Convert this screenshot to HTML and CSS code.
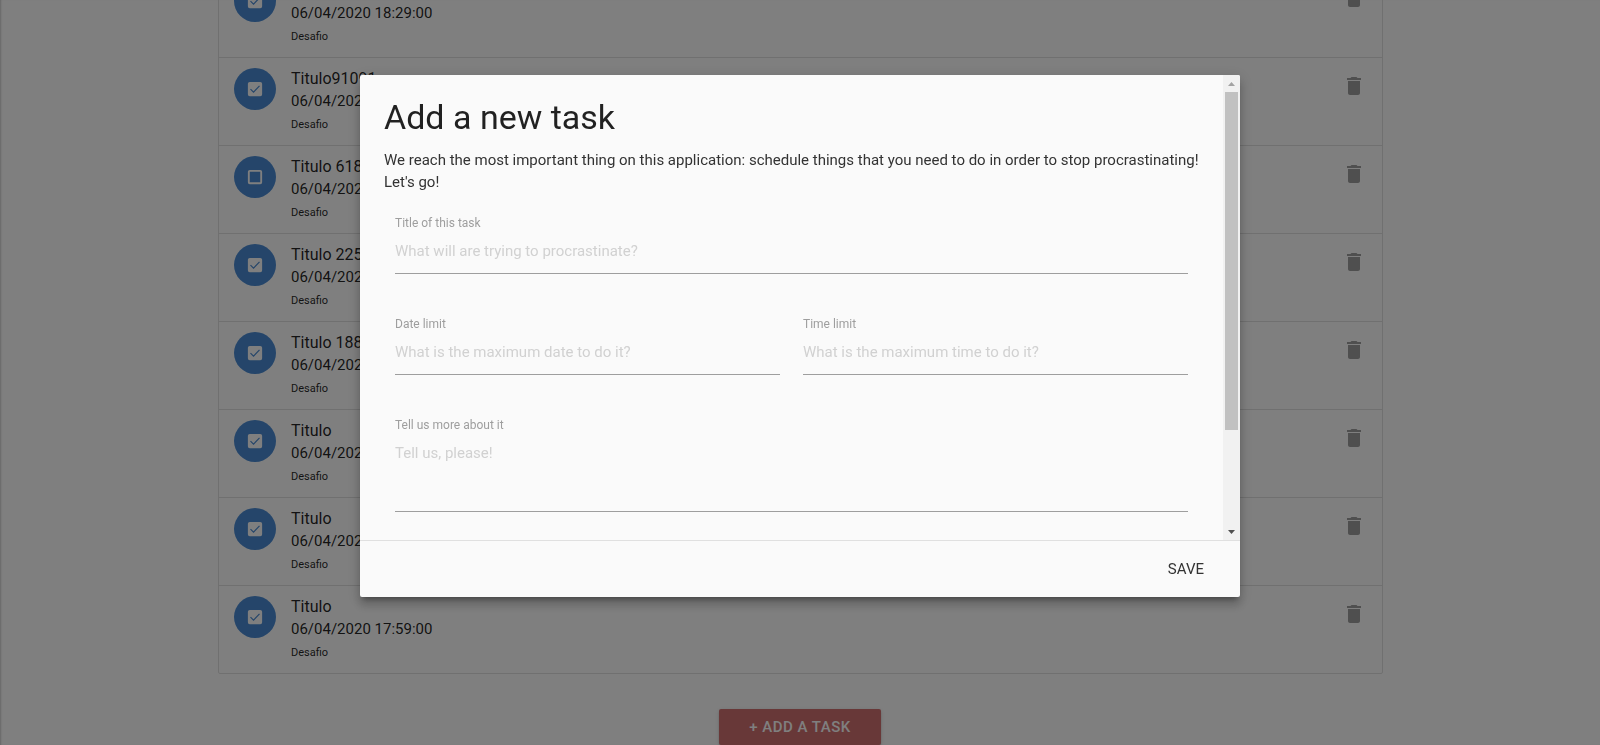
FILE: index.html
```html
<!DOCTYPE html>
<html lang="en">
<head>
<meta charset="utf-8">
<title>Tasks</title>
<meta name="viewport" content="width=device-width, initial-scale=1">
<link rel="stylesheet" href="styles.css">
</head>
<body>
<svg class="sprite" aria-hidden="true">
  <symbol id="icon-checked" viewBox="0 0 24 24">
    <path fill="currentColor" d="M5 2.500h14a2.500 2.500 0 0 1 2.500 2.500v14a2.500 2.500 0 0 1-2.500 2.500H5a2.500 2.500 0 0 1-2.500-2.500V5A2.500 2.500 0 0 1 5 2.500z"/>
    <path class="tick" d="M6 12.200l4 4 8-8.400"/>
  </symbol>
  <symbol id="icon-unchecked" viewBox="0 0 24 24">
    <path fill="currentColor" d="M19 5v14H5V5h14m0-2.500H5A2.500 2.500 0 0 0 2.500 5v14A2.500 2.500 0 0 0 5 21.500h14a2.500 2.500 0 0 0 2.500-2.500V5A2.500 2.500 0 0 0 19 2.500z"/>
  </symbol>
  <symbol id="icon-delete" viewBox="0 0 24 24">
    <path fill="currentColor" d="M6 19c0 1.100.9 2 2 2h8c1.100 0 2-.9 2-2V7H6v12zM19 4h-3.500l-1-1h-5l-1 1H5v2h14V4z"/>
  </symbol>
</svg>
<main class="page">
  <div class="container">
    <ul class="collection" id="tasks"></ul>
    <div class="actions"><button class="btn" type="button">+ ADD A TASK</button></div>
  </div>
</main>
<div class="overlay">
  <div class="modal" role="dialog" aria-modal="true" aria-labelledby="modal-title">
    <div class="modal-body">
      <form class="modal-content" id="task-form">
        <h4 class="modal-title" id="modal-title">Add a new task</h4>
        <p class="modal-text">We reach the most important thing on this application: schedule things that you need to do in order to stop procrastinating! Let's go!</p>
        <div class="fields">
          <div class="field wide">
            <label for="title">Title of this task</label>
            <input id="title" type="text" placeholder="What will are trying to procrastinate?">
          </div>
          <div class="field">
            <label for="date">Date limit</label>
            <input id="date" type="text" placeholder="What is the maximum date to do it?">
          </div>
          <div class="field">
            <label for="time">Time limit</label>
            <input id="time" type="text" placeholder="What is the maximum time to do it?">
          </div>
          <div class="field wide">
            <label for="details">Tell us more about it</label>
            <textarea id="details" placeholder="Tell us, please!"></textarea>
          </div>
        </div>
      </form>
      <div class="scrollbar" aria-hidden="true">
        <svg class="arrow up" viewBox="0 0 17 17"><path d="M5 11l3.500-4 3.500 4z"/></svg>
        <div class="track"><div class="thumb"></div></div>
        <svg class="arrow down" viewBox="0 0 17 17"><path d="M5 7h7l-3.500 4z"/></svg>
      </div>
    </div>
    <div class="modal-footer"><button class="btn-flat" type="submit" form="task-form">SAVE</button></div>
  </div>
</div>
<script src="tasks.js"></script>
</body>
</html>
```
FILE: styles.css
```css
* { box-sizing: border-box; }

body {
  margin: 0;
  background: #fff;
  color: rgba(0, 0, 0, 0.87);
  font-family: Roboto, "Liberation Sans", sans-serif;
  font-size: 15px;
  line-height: 22px;
}

button, input, textarea { font: inherit; }

.sprite { display: none; }

.page {
  height: 100vh;
  overflow: hidden;
  display: flex;
  flex-direction: column;
  justify-content: flex-end;
  box-shadow: inset 2px 0 2px -1px rgba(0, 0, 0, 0.2);
}

.container {
  width: 70%;
  margin: 0 auto;
}

.collection {
  list-style: none;
  margin: 0 -23px 35px -22px;
  padding: 0;
  border: 1px solid #e0e0e0;
  border-radius: 2px;
}

.item {
  display: flex;
  gap: 15px;
  padding: 10px 16px 8px 15px;
  border-bottom: 1px solid #e0e0e0;
}

.item:last-child { border-bottom: 0; }

.toggle {
  flex: none;
  display: grid;
  place-items: center;
  width: 42px;
  height: 42px;
  padding: 0;
  border: 0;
  border-radius: 50%;
  background: #4a8bd4;
  color: #fff;
}

.toggle svg { width: 18px; height: 18px; }

.tick {
  fill: none;
  stroke: #4a8bd4;
  stroke-width: 1.6;
}

.info { flex: 1; }
.info span { display: block; }
.name { font-size: 16px; }
.date { line-height: 23px; }
.tag { font-size: 11px; line-height: 24px; }

.delete {
  align-self: flex-start;
  margin-top: 6px;
  padding: 0;
  border: 0;
  background: none;
  color: #9e9e9e;
}

.delete svg { display: block; width: 24px; height: 24px; }

.actions { text-align: center; }

.btn {
  display: inline-block;
  height: 36px;
  padding: 0 30px;
  border: 0;
  border-radius: 2px;
  background: #d07070;
  color: #fff;
  font-weight: 500;
  letter-spacing: 0.5px;
  vertical-align: top;
  box-shadow: 0 2px 2px rgba(0, 0, 0, 0.14), 0 1px 5px rgba(0, 0, 0, 0.12);
}

.overlay {
  position: fixed;
  inset: 0;
  background: rgba(0, 0, 0, 0.5);
  display: flex;
  justify-content: center;
  align-items: flex-start;
  padding-top: 75px;
}

.modal {
  width: 55%;
  height: 70vh;
  display: flex;
  flex-direction: column;
  overflow: hidden;
  border-radius: 2px;
  background: #fafafa;
  box-shadow: 0 8px 10px 1px rgba(0, 0, 0, 0.14), 0 3px 14px 2px rgba(0, 0, 0, 0.12), 0 5px 5px -3px rgba(0, 0, 0, 0.3);
}

.modal-body { flex: 1; display: flex; min-height: 0; }

.modal-content {
  flex: 1;
  min-width: 0;
  overflow: hidden;
  padding: 24px;
}

.modal-title {
  margin: 0 0 13px;
  font-size: 34px;
  line-height: 37px;
  font-weight: 400;
}

.modal-text { margin: 0; color: #333; }

.fields {
  display: grid;
  grid-template-columns: 1fr 1fr;
  column-gap: 23px;
  row-gap: 44px;
  padding: 24px 11px 0;
}

.field { display: flex; flex-direction: column; }
.field.wide { grid-column: 1 / -1; }

.field label {
  color: #9e9e9e;
  font-size: 12px;
  line-height: 12px;
}

.field input,
.field textarea {
  width: 100%;
  height: 45px;
  padding: 0;
  border: 0;
  border-bottom: 1px solid #9e9e9e;
  border-radius: 0;
  outline: 0;
  background: transparent;
  resize: none;
}

.field textarea { height: 81px; padding: 11px 0; }

.field input::placeholder,
.field textarea::placeholder { color: #d1d1d1; }

.scrollbar {
  width: 17px;
  display: flex;
  flex-direction: column;
  background: #f1f1f1;
}

.arrow { width: 17px; height: 17px; }
.up { fill: #a3a3a3; }
.down { fill: #505050; }
.track { flex: 1; padding: 0 2px; }
.thumb { height: 78.5%; background: #c1c1c1; }

.modal-footer {
  height: 57px;
  padding: 10px 6px;
  border-top: 1px solid #e0e0e0;
  text-align: right;
}

.btn-flat {
  height: 36px;
  padding: 0 30px;
  border: 0;
  background: none;
  color: #343434;
}
```
FILE: tasks.js
```js
const tasks = [
  { name: "Titulo", date: "06/04/2020 18:29:00", done: true },
  { name: "Titulo91091", date: "06/04/2020 18:29:00", done: true },
  { name: "Titulo 618", date: "06/04/2020 18:29:00", done: false },
  { name: "Titulo 225", date: "06/04/2020 18:29:00", done: true },
  { name: "Titulo 188", date: "06/04/2020 18:29:00", done: true },
  { name: "Titulo", date: "06/04/2020 17:59:00", done: true },
  { name: "Titulo", date: "06/04/2020 17:59:00", done: true },
  { name: "Titulo", date: "06/04/2020 17:59:00", done: true }
];

document.getElementById("tasks").innerHTML = tasks.map(task => `
  <li class="item">
    <button class="toggle" type="button" aria-label="Toggle task">
      <svg><use href="#icon-${task.done ? "checked" : "unchecked"}"/></svg>
    </button>
    <div class="info">
      <span class="name">${task.name}</span>
      <span class="date">${task.date}</span>
      <span class="tag">Desafio</span>
    </div>
    <button class="delete" type="button" aria-label="Delete task">
      <svg><use href="#icon-delete"/></svg>
    </button>
  </li>`).join("");
```
